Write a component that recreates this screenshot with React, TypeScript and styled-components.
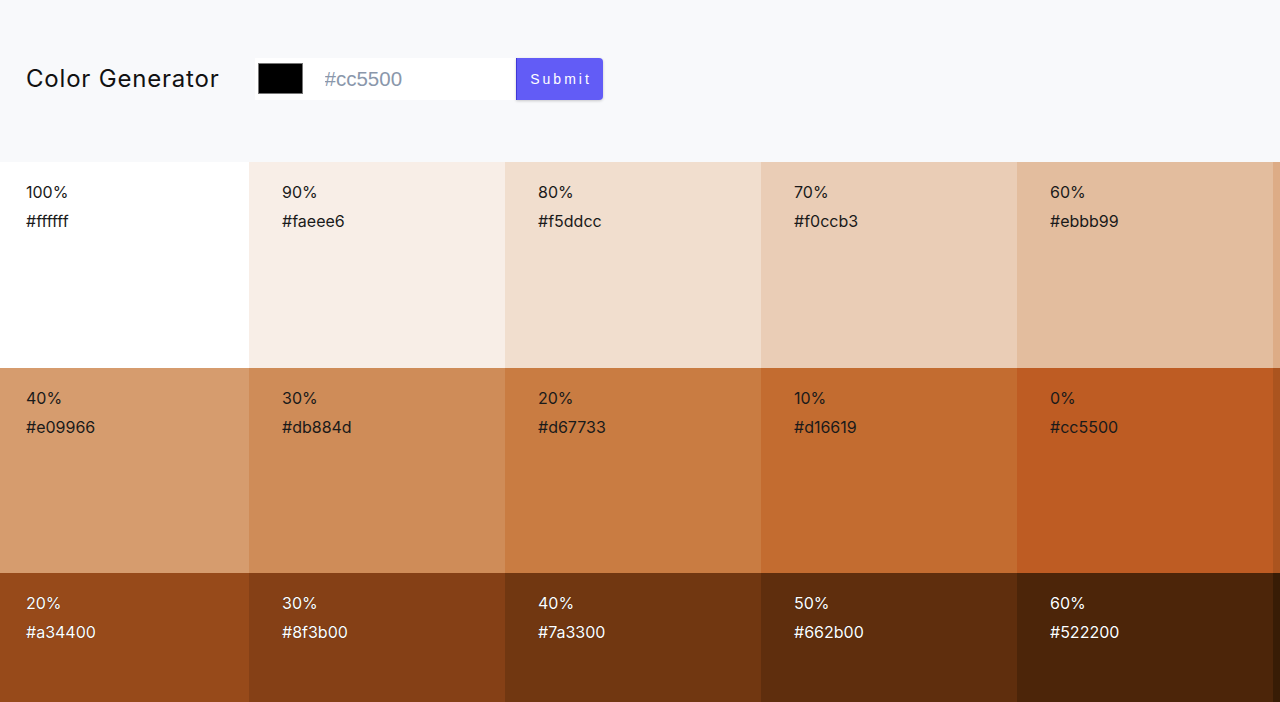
import React from "react";
import styled, { createGlobalStyle } from "styled-components";

const GlobalStyle = createGlobalStyle`
  * { box-sizing: border-box; }
  html, body { margin: 0; padding: 0; }
  body {
    font-family: Inter, "Noto Sans", sans-serif;
    background: #f8f9fb;
    color: #102a42;
    overflow: hidden;
  }
`;

// The reference was captured on a wide-gamut display: convert sRGB values
// into what the screenshot shows (sRGB -> Display P3 numeric values).
const toLin = (c: number) => (c <= 0.04045 ? c / 12.92 : Math.pow((c + 0.055) / 1.055, 2.4));
const toGamma = (c: number) => {
  const v = Math.max(0, Math.min(1, c));
  return v <= 0.0031308 ? v * 12.92 : 1.055 * Math.pow(v, 1 / 2.4) - 0.055;
};
const display = (hex: string) => {
  const h = hex.replace("#", "");
  const r = toLin(parseInt(h.slice(0, 2), 16) / 255);
  const g = toLin(parseInt(h.slice(2, 4), 16) / 255);
  const b = toLin(parseInt(h.slice(4, 6), 16) / 255);
  const R = 0.8225 * r + 0.1774 * g;
  const G = 0.0332 * r + 0.9669 * g;
  const B = 0.0171 * r + 0.0724 * g + 0.9108 * b;
  const to = (v: number) => Math.round(toGamma(v) * 255);
  return `rgb(${to(R)}, ${to(G)}, ${to(B)})`;
};

const Page = styled.main`
  width: 1280px;
  height: 702px;
  overflow: hidden;
`;

const Header = styled.section`
  height: 162px;
  display: flex;
  align-items: center;
  padding: 0 0 5px 26px;
  gap: 35px;
  background: #f8f9fb;
`;

const Title = styled.h3`
  margin: 0;
  font-family: Inter, "Noto Sans", sans-serif;
  font-weight: 400;
  font-size: 24px;
  color: #111;
  letter-spacing: 0.8px;
`;

const Form = styled.form`
  display: flex;
  align-items: stretch;
  height: 42px;
`;

const Field = styled.div`
  display: flex;
  align-items: center;
  background: #fff;
  width: 261px;
  padding-left: 3px;
`;

const Swatch = styled.span<{ $color: string }>`
  display: block;
  width: 45px;
  height: 31px;
  background: ${(p) => p.$color};
  border: 1.5px solid #767676;
  flex-shrink: 0;
`;

const TextInput = styled.input`
  border: none;
  outline: none;
  background: transparent;
  width: 100%;
  height: 100%;
  padding: 0 0 0 22px;
  font-family: "Liberation Sans", Arial, sans-serif;
  font-size: 20.5px;
  color: #102a42;
  &::placeholder {
    color: #8a97ab;
  }
`;

const Button = styled.button`
  width: 87px;
  border: none;
  border-left: 1px solid #3f37d6;
  border-radius: 0 4px 4px 0;
  background: #625cf6;
  color: #fff;
  font-family: "Liberation Sans", Arial, sans-serif;
  font-size: 14px;
  letter-spacing: 3px;
  padding: 0 0 0 3px;
  box-shadow: 0 1px 3px rgba(0, 0, 0, 0.2);
  cursor: pointer;
`;

const Grid = styled.section`
  display: grid;
  grid-template-columns: repeat(6, 256px);
  grid-auto-rows: 205.7px;
  margin-left: -7px;
  width: 1536px;
`;

const Tile = styled.article<{ $bg: string; $light: boolean }>`
  background: ${(p) => p.$bg};
  color: ${(p) => (p.$light ? "#ffffff" : "#1a1a1a")};
  padding: 16px 0 0 33px;
  font-family: Inter, "Noto Sans", sans-serif;
  font-size: 16px;
  text-shadow: ${(p) => (p.$light ? "0 0 1px rgba(0,0,0,0.6)" : "none")};
`;

const Line = styled.p`
  margin: 0;
  line-height: 29px;
`;

const colors: { pct: string; hex: string }[] = [
  { pct: "100%", hex: "ffffff" },
  { pct: "90%", hex: "faeee6" },
  { pct: "80%", hex: "f5ddcc" },
  { pct: "70%", hex: "f0ccb3" },
  { pct: "60%", hex: "ebbb99" },
  { pct: "50%", hex: "e6aa80" },
  { pct: "40%", hex: "e09966" },
  { pct: "30%", hex: "db884d" },
  { pct: "20%", hex: "d67733" },
  { pct: "10%", hex: "d16619" },
  { pct: "0%", hex: "cc5500" },
  { pct: "10%", hex: "b84d00" },
  { pct: "20%", hex: "a34400" },
  { pct: "30%", hex: "8f3b00" },
  { pct: "40%", hex: "7a3300" },
  { pct: "50%", hex: "662b00" },
  { pct: "60%", hex: "522200" },
  { pct: "70%", hex: "3d1a00" },
];

export default function App() {
  return (
    <>
      <GlobalStyle />
      <Page>
        <Header>
          <Title>Color Generator</Title>
          <Form onSubmit={(e) => e.preventDefault()}>
            <Field>
              <Swatch $color="#000000" />
              <TextInput type="text" placeholder="#cc5500" />
            </Field>
            <Button type="submit">Submit</Button>
          </Form>
        </Header>
        <Grid>
          {colors.map((c, i) => (
            <Tile key={i} $bg={display(c.hex)} $light={i > 10}>
              <Line>{c.pct}</Line>
              <Line>#{c.hex}</Line>
            </Tile>
          ))}
        </Grid>
      </Page>
    </>
  );
}
